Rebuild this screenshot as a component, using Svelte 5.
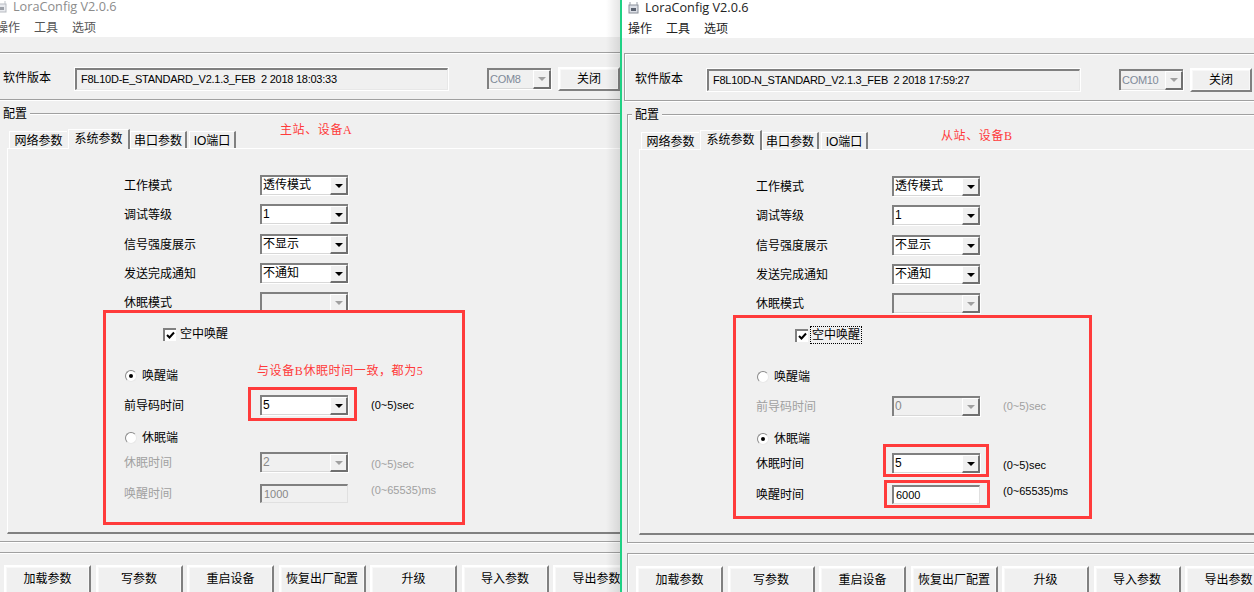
<script>
  const btns = ['加载参数', '写参数', '重启设备', '恢复出厂配置', '升级', '导入参数', '导出参数'];
  const tabs = ['网络参数', '系统参数', '串口参数', 'IO端口'];

  const left = {
    cls: 'left',
    version: 'F8L10D-E_STANDARD_V2.1.3_FEB  2 2018 18:03:33',
    com: 'COM8',
    focus: false,
    master: true,
    preamble: '5',
    sleep: '2',
    wake: '1000',
    notes: [{ text: '主站、设备A', x: 290, y: 124 }, { text: '与设备B休眠时间一致，都为5', x: 267, y: 365 }],
    boxes: [
      { x: 113, y: 311, w: 362, h: 215 },
      { x: 258, y: 388, w: 109, h: 34 }
    ]
  };
  const right = {
    cls: 'right',
    version: 'F8L10D-N_STANDARD_V2.1.3_FEB  2 2018 17:59:27',
    com: 'COM10',
    focus: true,
    master: false,
    preamble: '0',
    sleep: '5',
    wake: '6000',
    notes: [{ text: '从站、设备B', x: 319, y: 129 }],
    boxes: [
      { x: 111, y: 315, w: 359, h: 204 },
      { x: 261, y: 444, w: 106, h: 33 },
      { x: 262, y: 480, w: 106, h: 28 }
    ]
  };
</script>

{#snippet combo(value, disabled = false, extra = '')}
  <div class="combo {extra}" class:off={disabled}>
    <span class="val">{value}</span>
    <span class="arrow"><i></i></span>
  </div>
{/snippet}

{#snippet radio(on)}
  <span class="radio">{#if on}<i></i>{/if}</span>
{/snippet}

{#snippet field(label, control, range, gap, disabled = false, rangeClass = '')}
  <div class="row" class:dim={disabled} style="margin-top:{gap}px">
    <span class="lbl">{label}</span>
    <div class="ctl">{@render control()}</div>
    {#if range}<span class="range {rangeClass}">{range}</span>{/if}
  </div>
{/snippet}

{#snippet win(w)}
  <section class="win {w.cls}">
    <div class="inner">
      <header class="head">
        <div class="title">
          <svg width="13" height="13" viewBox="0 0 13 13">
            <rect x="2" y="4" width="9" height="8" fill="#dcdfe6" stroke="#8a8f99" />
            <rect x="4" y="7" width="5" height="3" fill="#5b6270" />
            <path d="M3 4V1M10 4V1" stroke="#9aa0aa" />
          </svg>
          <span>LoraConfig V2.0.6</span>
        </div>
        <nav class="menu"><span>操作</span><span>工具</span><span>选项</span></nav>
      </header>

      <div class="vgroup">
        <span class="vlabel">软件版本</span>
        <div class="vfield">{w.version}</div>
        {@render combo(w.com, true, 'com')}
        <div class="btn close">关闭</div>
      </div>

      <div class="cfg">
        <span class="legend">配置</span>
        <div class="tabs">
          {#each tabs as t, i}
            <div class="tab t{i}" class:active={i === 1}>{t}</div>
          {/each}
        </div>
        <div class="pane">
          {#snippet c1()}{@render combo('透传模式')}{/snippet}
          {#snippet c2()}{@render combo('1')}{/snippet}
          {#snippet c3()}{@render combo('不显示')}{/snippet}
          {#snippet c4()}{@render combo('不通知')}{/snippet}
          {#snippet c5()}{@render combo('', true)}{/snippet}
          {#snippet c6()}{@render combo(w.preamble, !w.master)}{/snippet}
          {#snippet c7()}{@render combo(w.sleep, w.master)}{/snippet}
          {#snippet c8()}<div class="input" class:off={w.master}>{w.wake}</div>{/snippet}

          {@render field('工作模式', c1, '', 26)}
          {@render field('调试等级', c2, '', 9)}
          {@render field('信号强度展示', c3, '', 10)}
          {@render field('发送完成通知', c4, '', 9)}
          {@render field('休眠模式', c5, '', 9)}

          <div class="check">
            <span class="box">
              <svg width="9" height="9" viewBox="0 0 9 9"><path d="M1 4l2.5 2.5L8 1.5" fill="none" stroke="#000" stroke-width="2" /></svg>
            </span>
            <span class="clabel" class:focus={w.focus}>空中唤醒</span>
          </div>

          <div class="radio-row first">{@render radio(w.master)}<span>唤醒端</span></div>
          {@render field('前导码时间', c6, '(0~5)sec', 11, !w.master)}
          <div class="radio-row second">{@render radio(!w.master)}<span>休眠端</span></div>
          {@render field('休眠时间', c7, '(0~5)sec', 6, w.master, 'low')}
          {@render field('唤醒时间', c8, '(0~65535)ms', 11, w.master, 'high')}
        </div>
      </div>

      <div class="bottom">
        {#each btns as b}
          <div class="btn">{b}</div>
        {/each}
      </div>

      {#each w.boxes as b}
        <div class="redbox" style="left:{b.x}px;top:{b.y}px;width:{b.w}px;height:{b.h}px"></div>
      {/each}
      {#each w.notes as n}
        <span class="note" style="left:{n.x}px;top:{n.y}px">{n.text}</span>
      {/each}
    </div>
  </section>
{/snippet}

<main class="desk">
  {@render win(left)}
  {@render win(right)}
</main>

<style>
  :global(body) {
    margin: 0;
    background: #f0f0f0;
  }

  .desk {
    display: flex;
    width: 1254px;
    height: 592px;
    overflow: hidden;
    font: 12px/16px "Liberation Sans", "Noto Sans CJK SC", sans-serif;
    color: #000;
  }

  .win {
    position: relative;
    height: 592px;
    overflow: hidden;
    background: #f0f0f0;
    flex: none;
  }

  .win.left {
    width: 620px;
  }

  .win.left::after {
    content: "";
    position: absolute;
    top: 0;
    right: 0;
    bottom: 0;
    width: 14px;
    background: linear-gradient(to right, rgba(0, 0, 0, 0), rgba(0, 0, 0, 0.1));
  }

  .win.right {
    width: 634px;
    box-sizing: border-box;
    border-left: 2px solid #1fd184;
  }

  .inner {
    position: relative;
    width: 660px;
    height: 600px;
  }

  .left .inner {
    margin: -1px 0 0 -10px;
  }

  .head {
    box-sizing: border-box;
    height: 38px;
    background: #fff;
  }

  .title {
    display: flex;
    align-items: center;
    gap: 5px;
    height: 14px;
    padding-left: 5px;
    font: 12.7px/14px "Open Sans", sans-serif;
    color: #222;
  }

  .left .title {
    color: #8c8c8c;
  }

  .left .title svg {
    opacity: 0.6;
  }

  .menu {
    display: flex;
    gap: 14px;
    padding: 7px 0 0 6px;
    color: #222;
  }

  .left .menu {
    color: #555;
  }

  .vgroup {
    display: flex;
    align-items: flex-start;
    box-sizing: border-box;
    height: 48px;
    margin: 15px 0 0 2px;
    padding: 15px 0 0 10px;
    border: 1px solid #a0a0a0;
    box-shadow: inset 1px 1px 0 #fff, 1px 1px 0 #fff;
  }

  .vlabel {
    width: 72px;
    margin-top: 2px;
    flex: none;
  }

  .vfield {
    box-sizing: border-box;
    width: 373px;
    height: 22px;
    padding-left: 4px;
    border: 2px solid #808080;
    border-width: 2px 1px 1px 2px;
    border-color: #808080 #e8e8e8 #e8e8e8 #808080;
    outline: 1px solid #fff;
    outline-offset: 0;
    font-size: 11px;
    letter-spacing: -0.25px;
    line-height: 18px;
    white-space: pre;
    flex: none;
  }

  .combo {
    position: relative;
    display: flex;
    box-sizing: border-box;
    width: 88px;
    height: 20px;
    border: 2px solid #808080;
    border-width: 2px 0 0 2px;
    box-shadow: 1px 1px 0 #fff, inset -1px -1px 0 #d8d8d8;
    background: #fff;
  }

  .combo.off {
    background: #f0f0f0;
    color: #888;
  }

  .combo .val {
    flex: 1;
    padding-left: 1px;
    line-height: 17px;
    overflow: hidden;
    white-space: nowrap;
  }

  .arrow {
    display: flex;
    align-items: center;
    justify-content: center;
    box-sizing: border-box;
    width: 18px;
    height: 18px;
    background: #f0f0f0;
    border: 1px solid #fff;
    border-right: 2px solid #707070;
    border-bottom: 2px solid #707070;
  }

  .arrow i {
    width: 0;
    height: 0;
    border-left: 4px solid transparent;
    border-right: 4px solid transparent;
    border-top: 4px solid #000;
  }

  .off .arrow i {
    border-top-color: #a0a0a0;
  }

  .combo.com {
    width: 64px;
    height: 21px;
    margin-left: 39px;
    color: #7f8a99;
    font-size: 11px;
    letter-spacing: -0.3px;
    flex: none;
  }

  .combo.com .val {
    line-height: 19px;
  }

  .combo.com .arrow {
    height: 19px;
  }

  .btn {
    display: flex;
    align-items: center;
    justify-content: center;
    box-sizing: border-box;
    border: 2px solid;
    border-color: #fff #808080 #808080 #fff;
    box-shadow: inset 0 0 0 1px #f8f8f8;
    white-space: nowrap;
  }

  .close {
    width: 62px;
    height: 24px;
    margin: -1px 0 0 7px;
    flex: none;
  }

  .cfg {
    position: relative;
    box-sizing: border-box;
    height: 429px;
    margin: 13px 0 0 5px;
    padding-top: 15px;
    border: 1px solid #a0a0a0;
    box-shadow: inset 1px 1px 0 #fff, 1px 1px 0 #fff;
  }

  .legend {
    position: absolute;
    top: -7px;
    left: 4px;
    padding: 0 3px 0 3px;
    background: #f0f0f0;
    line-height: 14px;
  }

  .tabs {
    position: relative;
    height: 19px;
    z-index: 1;
  }

  .tab {
    position: absolute;
    top: 2px;
    height: 17px;
    box-sizing: border-box;
    padding-top: 1px;
    text-align: center;
    border-top: 1px solid #fff;
    border-left: 1px solid #fff;
    border-right: 2px solid #808080;
    line-height: 16px;
  }

  .t0 { left: 13px; width: 58px; border-right: none; }
  .t1 { left: 72px; width: 62px; }
  .t2 { left: 134px; width: 57px; }
  .t3 { left: 193px; width: 47px; }

  .tab.active {
    top: 0;
    height: 20px;
    background: #f0f0f0;
  }

  .pane {
    box-sizing: border-box;
    height: 386px;
    margin-left: 11px;
    padding-left: 116px;
    border-top: 1px solid #fff;
    border-left: 1px solid #fff;
    border-bottom: 2px solid #808080;
  }

  .row {
    display: flex;
    align-items: center;
    height: 20px;
  }

  .lbl {
    width: 136px;
    padding-top: 1px;
    flex: none;
  }

  .ctl {
    width: 88px;
    flex: none;
  }

  .range {
    margin: -1px 0 0 23px;
    font-size: 11px;
    white-space: nowrap;
  }

  .range.low {
    margin-top: 3px;
  }

  .range.high {
    margin-top: -7px;
  }

  .dim {
    color: #a0a0a0;
  }

  .input {
    box-sizing: border-box;
    width: 88px;
    height: 19px;
    padding-left: 2px;
    border: 2px solid #808080;
    border-width: 2px 1px 1px 2px;
    border-color: #808080 #e0e0e0 #e0e0e0 #808080;
    background: #fff;
    font-size: 11px;
    line-height: 16px;
  }

  .input.off {
    background: #f0f0f0;
    color: #888;
  }

  .check {
    display: flex;
    align-items: center;
    gap: 2px;
    height: 16px;
    margin: 14px 0 0 39px;
  }

  .box {
    display: flex;
    align-items: center;
    justify-content: center;
    box-sizing: border-box;
    width: 13px;
    height: 13px;
    border: 1px solid #808080;
    border-width: 2px 0 0 2px;
    background: #fff;
  }

  .clabel {
    padding: 0 1px;
    border: 1px solid transparent;
  }

  .clabel.focus {
    border: 1px dotted #000;
  }

  .radio-row {
    display: flex;
    align-items: center;
    gap: 5px;
    height: 16px;
    margin-left: 1px;
  }

  .radio-row.first {
    margin-top: 26px;
  }

  .radio-row.second {
    margin-top: 15px;
  }

  .radio {
    display: flex;
    align-items: center;
    justify-content: center;
    box-sizing: border-box;
    width: 12px;
    height: 12px;
    border-radius: 50%;
    border: 1px solid;
    border-color: #8a8a8a #e8e8e8 #e8e8e8 #8a8a8a;
    background: #fff;
  }

  .radio i {
    width: 4px;
    height: 4px;
    border-radius: 50%;
    background: #000;
  }

  .bottom {
    box-sizing: border-box;
    display: grid;
    grid-template-columns: repeat(7, 87px);
    column-gap: 4.5px;
    height: 60px;
    margin: 10px 0 0 5px;
    padding: 12px 0 0 8px;
    border: 1px solid #a0a0a0;
    border-bottom: none;
    box-shadow: inset 1px 1px 0 #fff;
  }

  .bottom .btn {
    height: 28px;
    padding-bottom: 2px;
    border-bottom: none;
  }

  .redbox {
    position: absolute;
    box-sizing: border-box;
    border: 3px solid #ff3b3b;
    pointer-events: none;
  }

  .note {
    position: absolute;
    color: #ff3b3b;
    font-family: "Liberation Serif", "Noto Sans CJK SC", serif;
    letter-spacing: 0.6px;
    line-height: 14px;
    white-space: nowrap;
  }
</style>
